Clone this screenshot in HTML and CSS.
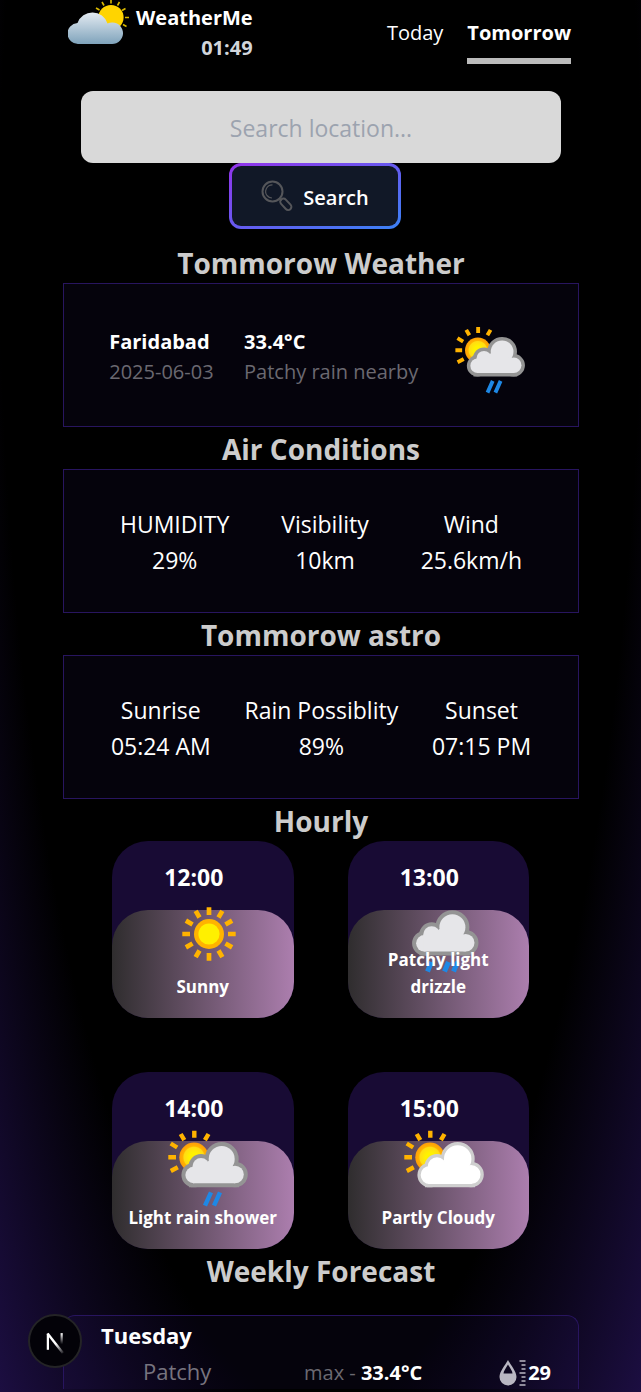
FILE: index.html
```html
<!DOCTYPE html>
<html lang="en">
<head>
<meta charset="utf-8">
<meta name="viewport" content="width=device-width, initial-scale=1">
<title>WeatherMe</title>
<link rel="stylesheet" href="styles.css">
</head>
<body>
<svg class="defs" aria-hidden="true">
  <defs>
    <radialGradient id="sun-fill"><stop offset="0.3" stop-color="#fff200"/><stop offset="0.68" stop-color="#ffdc14"/><stop offset="0.76" stop-color="#ffb300"/><stop offset="1" stop-color="#ff9d0a"/></radialGradient>
    <linearGradient id="logo-cloud" x1="0" y1="0" x2="0" y2="1"><stop offset="0" stop-color="#e4ebf2"/><stop offset="1" stop-color="#7fa3bb"/></linearGradient>
    <linearGradient id="n-right" x1="0" y1="0" x2="0" y2="1"><stop offset="0" stop-color="#fff"/><stop offset="1" stop-color="#fff" stop-opacity="0"/></linearGradient>
    <linearGradient id="n-diag" gradientUnits="userSpaceOnUse" x1="28" y1="30" x2="36" y2="40"><stop offset="0" stop-color="#fff"/><stop offset="1" stop-color="#fff" stop-opacity="0.1"/></linearGradient>
    <g id="cloud">
      <circle cx="60.700" cy="42" r="13"/><circle cx="40" cy="49.500" r="8.500"/><circle cx="32.700" cy="58" r="8.300"/><circle cx="74" cy="57.500" r="8.800"/>
      <path d="M32 50h8l10-8 24 8v16.300H32z"/>
    </g>
    <g id="sun-behind">
      <circle cx="33" cy="40.300" r="14.700" fill="url(#sun-fill)"/>
      <path d="M33.300 13.700v7M19.700 17l3.600 6.200M47.500 17l-3.600 6.200M9.700 26.500l6.500 4M7.300 40.300H15M9.800 54l7-3.700" stroke="#ffb300" stroke-width="4.400" fill="none"/>
    </g>
    <symbol id="rain-shower" viewBox="0 0 96 96">
      <use href="#sun-behind"/>
      <use href="#cloud" fill="#949494" stroke="#949494" stroke-width="8"/>
      <use href="#cloud" fill="#e6e6e9"/>
      <path d="M50 75.300l-6 13.400M59 75.300l-6 13.400" stroke="#1e88e5" stroke-width="4.400"/>
    </symbol>
    <symbol id="partly-cloudy" viewBox="0 0 96 96">
      <use href="#sun-behind"/>
      <use href="#cloud" fill="#cfcfcf" stroke="#cfcfcf" stroke-width="8"/>
      <use href="#cloud" fill="#fff" stroke="#fff" stroke-width="1.500"/>
    </symbol>
    <symbol id="drizzle" viewBox="0 0 96 96">
      <g transform="translate(-5.300 -0.700)">
        <use href="#cloud" fill="#949494" stroke="#949494" stroke-width="8"/>
        <use href="#cloud" fill="#e6e6e9"/>
      </g>
      <path d="M34.500 76l-4 9.500M51.500 76l-4 9.500M60.500 76l-4 9.500" stroke="#1e88e5" stroke-width="5"/>
    </symbol>
    <symbol id="sunny" viewBox="0 0 96 96">
      <circle cx="48" cy="48" r="15" fill="#ffb300"/><circle cx="48" cy="48" r="10.600" fill="#fff000"/>
      <g stroke="#ffb300" stroke-width="4.700">
        <path id="rays" d="M48 21.300v7.700M48 67v7.700M21.300 48H29M67 48h7.700"/>
        <use href="#rays" transform="rotate(30 48 48)"/><use href="#rays" transform="rotate(60 48 48)"/>
      </g>
    </symbol>
  </defs>
</svg>

<div class="scroller">
<div class="page">
  <header class="header">
    <div class="brand">
      <svg class="logo" viewBox="0 0 62 45" aria-hidden="true">
        <g stroke="#d9b900" stroke-width="1.600"><path d="M43-.500v4M51.500 2l-2 3.500M57.500 8.500L54 10.500M61 17.500h-4M58.500 26.500L55 24.500M34 2l2 3.500M28 8l3.500 2"/></g>
        <circle cx="43" cy="17.500" r="12.600" fill="#ffd400"/>
        <path d="M10.500 44A10.500 10.500 0 0 1 9.500 23 15.800 15.800 0 0 1 39.500 23.500 10.800 10.800 0 1 1 43.500 44z" fill="url(#logo-cloud)"/>
      </svg>
      <div class="brand-text"><span>WeatherMe</span><time class="clock">01:49</time></div>
    </div>
    <nav class="nav"><a href="#today">Today</a><a class="active" href="#tomorrow">Tomorrow</a></nav>
  </header>

  <form class="search">
    <input class="search-input" type="text" placeholder="Search location..." aria-label="Search location">
    <button class="search-button" type="button">
      <svg class="search-icon" viewBox="0 0 32 32" fill="none" stroke="#55565a" stroke-width="2" aria-hidden="true">
        <circle cx="11.500" cy="11.500" r="10"/><path d="M11.500 4.800A6.700 6.700 0 0 0 6 15.500a7 7 0 0 0 5 2.500" stroke-width="1.200"/><path d="M18.500 18.500l2 2"/><rect x="-3.200" y="-6.700" width="6.400" height="13.400" rx="3.200" transform="translate(24.800 24.300) rotate(-43)"/>
      </svg>
      <span>Search</span>
    </button>
  </form>

  <main>
    <h2>Tommorow Weather</h2>
    <section class="panel current">
      <div><strong>Faridabad</strong><p>2025-06-03</p></div>
      <div><strong>33.4°C</strong><p>Patchy rain nearby</p></div>
      <svg class="current-icon" role="img" aria-label="Patchy rain nearby"><use href="#rain-shower"/></svg>
    </section>

    <h2>Air Conditions</h2>
    <section class="panel stats">
      <div><p>HUMIDITY</p><p>29%</p></div>
      <div><p>Visibility</p><p>10km</p></div>
      <div><p>Wind</p><p>25.6km/h</p></div>
    </section>

    <h2>Tommorow astro</h2>
    <section class="panel stats">
      <div><p>Sunrise</p><p>05:24 AM</p></div>
      <div><p>Rain Possiblity</p><p>89%</p></div>
      <div><p>Sunset</p><p>07:15 PM</p></div>
    </section>

    <h2>Hourly</h2>
    <section class="hours">
      <article class="hour"><time>12:00</time><div class="hour-body"><svg class="hour-icon" aria-hidden="true"><use href="#sunny"/></svg><p>Sunny</p></div></article>
      <article class="hour"><time>13:00</time><div class="hour-body"><svg class="hour-icon" aria-hidden="true"><use href="#drizzle"/></svg><p>Patchy light drizzle</p></div></article>
      <article class="hour"><time>14:00</time><div class="hour-body"><svg class="hour-icon" aria-hidden="true"><use href="#rain-shower"/></svg><p>Light rain shower</p></div></article>
      <article class="hour"><time>15:00</time><div class="hour-body"><svg class="hour-icon" aria-hidden="true"><use href="#partly-cloudy"/></svg><p>Partly Cloudy</p></div></article>
    </section>

    <h2>Weekly Forecast</h2>
    <section class="week">
      <h3>Tuesday</h3>
      <div class="week-row">
        <p class="week-text">Patchy</p>
        <p class="week-max">max - <strong>33.4°C</strong></p>
        <p class="week-humidity">
          <svg class="drop" viewBox="0 0 27 26" aria-hidden="true"><path fill="#b9b7c2" fill-rule="evenodd" d="M9 0C12 5.500 17.500 11.500 17.500 17a8.500 8.500 0 0 1-17 0C.500 11.500 6 5.500 9 0zM9 4.500C7 8 4.500 11 4.500 13.500h9C13.500 11 11 8 9 4.500z"/><path stroke="#b9b7c2" stroke-width="1.600" d="M20.500 1h6M22.500 5h4M22.500 9h4M20.500 13h6M22.500 17h4M22.500 21h4M20.500 25h6"/></svg>
          <strong>29</strong>
        </p>
      </div>
    </section>
  </main>
</div>
</div>

<button class="dev-badge" type="button" aria-label="Open developer tools">
  <svg viewBox="0 0 54 54" aria-hidden="true"><path d="M19.300 36.500V19" stroke="#fff" stroke-width="2.400"/><path d="M19 19l16.500 21" stroke="url(#n-diag)" stroke-width="2.600"/><path d="M33 18.500h2.400v12H33z" fill="url(#n-right)"/></svg>
</button>
</body>
</html>
```

FILE: styles.css
```css
* { box-sizing: border-box; }

body {
  margin: 0;
  background: #000;
  color: #fff;
  font-family: "Segoe UI", "Open Sans", "Noto Sans", sans-serif;
  font-size: 20px;
  line-height: 30px;
}

h2, h3, p { margin: 0; }
button, input { font: inherit; }
svg { display: block; flex: none; }
.defs { position: absolute; width: 0; height: 0; }

.scroller {
  height: 100vh;
  overflow-y: auto;
  scrollbar-width: none;
}

.page {
  min-height: 100%;
  padding: 0 62px 0 63px;
  background: radial-gradient(125% 2915px at 50% 233px, #000 40%, #63e 100%);
}

.header {
  display: flex;
  justify-content: space-between;
  align-items: flex-start;
  padding: 0 8px 0 5px;
}

.brand { display: flex; gap: 6px; font-weight: 700; }
.logo { width: 62px; height: 45px; }
.brand-text { display: flex; flex-direction: column; padding-top: 3px; text-align: right; }
.clock { color: #d1d5db; }

.nav { display: flex; gap: 24px; padding-top: 18px; }
.nav a { padding-bottom: 10px; border-bottom: 6px solid transparent; color: #fff; text-decoration: none; }
.nav .active { border-color: #bbb; font-weight: 700; }

.search {
  display: flex;
  flex-direction: column;
  align-items: center;
  padding: 27px 18px 12px;
}

.search-input {
  width: 100%;
  height: 72px;
  padding: 2px 18px 0;
  border: 0;
  border-radius: 12px;
  background: #d9d9d9;
  color: #111827;
  font-size: 23px;
  text-align: center;
}
.search-input::placeholder { color: #9ca3af; opacity: 1; }

.search-button {
  display: flex;
  align-items: center;
  gap: 10px;
  height: 66px;
  margin-right: 12px;
  padding: 0 29px;
  border: 3px solid transparent;
  border-radius: 12px;
  background: linear-gradient(#111827, #111827) padding-box, linear-gradient(to bottom right, #9333ea, #3b82f6) border-box;
  color: #fff;
  font-weight: 600;
}
.search-button span { padding-top: 3px; }
.search-icon { width: 32px; height: 32px; }

h2 {
  padding-top: 2px;
  color: #ccc;
  font-size: 28px;
  line-height: 40px;
  text-align: center;
}

.panel {
  display: flex;
  justify-content: space-around;
  align-items: center;
  min-height: 144px;
  padding: 2px 30px 0;
  border: 1px solid #28155f;
  background: rgba(102, 51, 238, 0.05);
}

.current { padding-top: 3px; }
.current p { color: #6b6971; }
.current-icon { width: 84px; height: 84px; }

.stats { font-size: 23px; line-height: 36px; text-align: center; }

.hours {
  display: grid;
  grid-template-columns: 1fr 1fr;
  gap: 54px;
  padding: 0 50px 0 49px;
}

.hour { border-radius: 36px; background: #180b34; text-align: center; }
.hour time {
  display: block;
  padding: 21px 18px 18px 0;
  font-size: 23px;
  font-weight: 700;
}

.hour-body {
  position: relative;
  display: flex;
  align-items: flex-end;
  justify-content: center;
  min-height: 108px;
  padding: 0 15px 18px;
  border-radius: 36px;
  background: linear-gradient(to right, #2f2d2e, #ac7eae);
  font-size: 17px;
  font-weight: 700;
  line-height: 27px;
}
.hour-body p { position: relative; }
.hour-icon {
  position: absolute;
  top: -24px;
  left: 49px;
  width: 96px;
  height: 96px;
}

.week {
  margin-top: 24px;
  padding: 1px 27px 0 37px;
  border: 1px solid #28155f;
  border-bottom: 0;
  border-radius: 12px 12px 0 0;
  background: rgba(102, 51, 238, 0.05);
}
.week h3 { font-size: 22px; line-height: 36px; }
.week-row { display: grid; grid-template-columns: 203px 1fr auto; align-items: start; }
.week-text { padding-left: 42px; color: #77747f; font-size: 22px; line-height: 36px; }
.week-max { padding-top: 5px; color: #6b6971; }
.week-max strong { color: #fff; }
.week-humidity { display: flex; align-items: center; gap: 2px; padding-top: 5px; }
.drop { width: 27px; height: 26px; }

.dev-badge {
  position: fixed;
  bottom: 24px;
  left: 28px;
  width: 54px;
  height: 54px;
  padding: 0;
  border: 2px solid #242426;
  border-radius: 50%;
  background: #030208;
}
.dev-badge svg { width: 50px; height: 50px; }
```
